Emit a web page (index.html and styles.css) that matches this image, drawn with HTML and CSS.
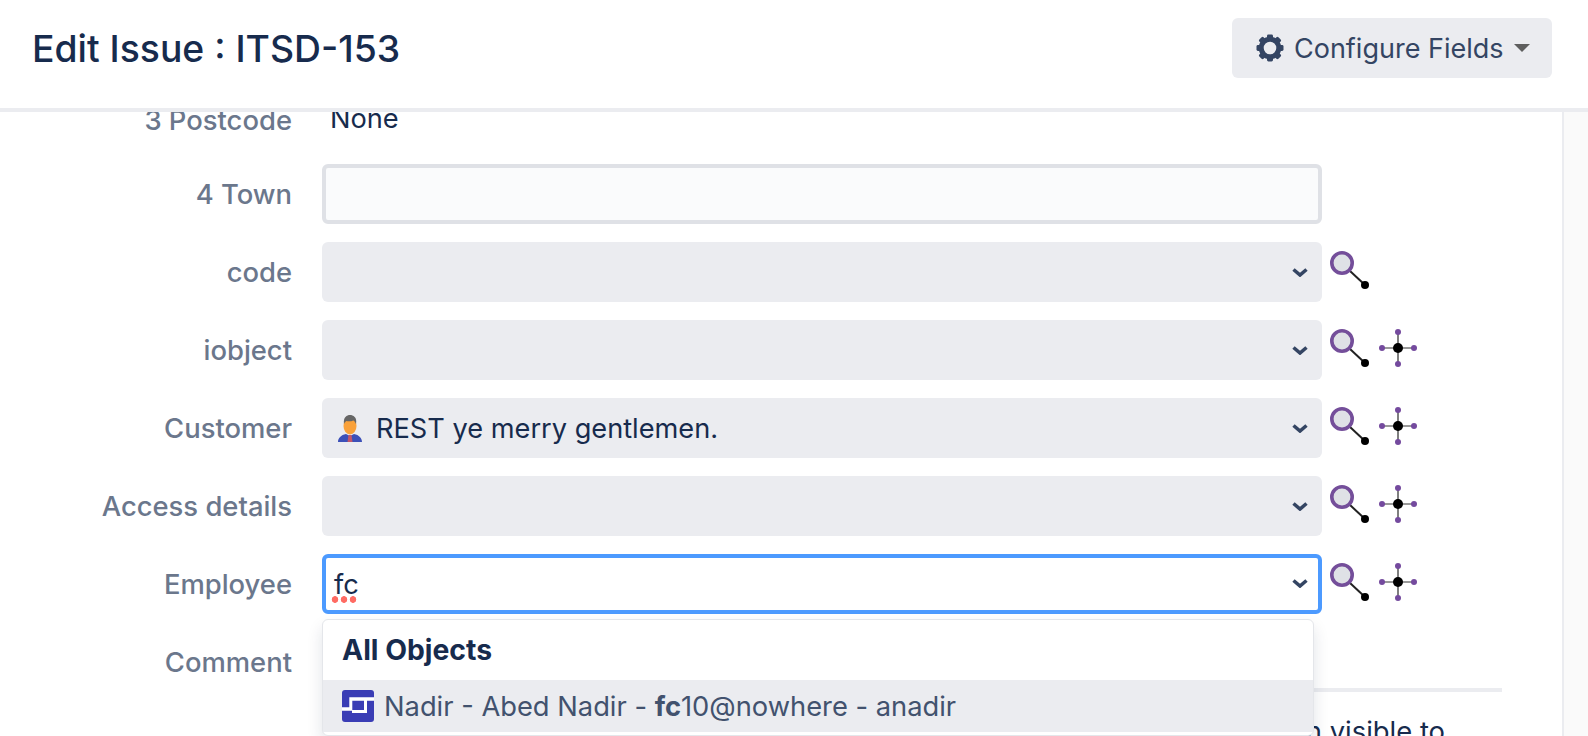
FILE: index.html
```html
<!DOCTYPE html>
<html>

<head>
    <title>Edit Issue : ITSD-153</title>
    <link rel="stylesheet" href="styles.css">
</head>

<body>
    <div class="dialogHeader">
        <h1 class="dialogTitle">Edit Issue : ITSD-153</h1>
        <button class="configureButton">
            <svg class="gearIcon" viewBox="0 0 28 28" width="28" height="28">
                <circle cx="14" cy="14" r="8.800" fill="none" stroke="#344563" stroke-width="5"/>
                <g fill="#344563">
                    <rect x="11" y="0.500" width="6" height="5" rx="1.400"/>
                    <rect x="11" y="22.500" width="6" height="5" rx="1.400"/>
                    <rect x="11" y="0.500" width="6" height="5" rx="1.400" transform="rotate(45 14 14)"/>
                    <rect x="11" y="22.500" width="6" height="5" rx="1.400" transform="rotate(45 14 14)"/>
                    <rect x="11" y="0.500" width="6" height="5" rx="1.400" transform="rotate(90 14 14)"/>
                    <rect x="11" y="22.500" width="6" height="5" rx="1.400" transform="rotate(90 14 14)"/>
                    <rect x="11" y="0.500" width="6" height="5" rx="1.400" transform="rotate(135 14 14)"/>
                    <rect x="11" y="22.500" width="6" height="5" rx="1.400" transform="rotate(135 14 14)"/>
                </g>
            </svg>
            <span>Configure Fields</span>
            <span class="caret"></span>
        </button>
    </div>

    <div class="dialogBody">
        <div class="formArea">
            <div class="formRow textRow">
                <label class="fieldLabel">3 Postcode</label>
                <span class="fieldValue">None</span>
            </div>
            <div class="formRow">
                <label class="fieldLabel">4 Town</label>
                <div class="textInput"></div>
            </div>
            <div class="formRow">
                <label class="fieldLabel">code</label>
                <div class="selectBox">
                    <svg class="chevron" viewBox="0 0 16 10" width="16" height="10"><use href="#chevronGlyph"/></svg>
                </div>
                <div class="fieldIcons">
                    <svg class="searchIcon" viewBox="0 0 40 40" width="40" height="40"><use href="#searchGlyph"/></svg>
                </div>
            </div>
            <div class="formRow">
                <label class="fieldLabel">iobject</label>
                <div class="selectBox">
                    <svg class="chevron" viewBox="0 0 16 10" width="16" height="10"><use href="#chevronGlyph"/></svg>
                </div>
                <div class="fieldIcons">
                    <svg class="searchIcon" viewBox="0 0 40 40" width="40" height="40"><use href="#searchGlyph"/></svg>
                    <svg class="graphIcon" viewBox="0 0 40 40" width="40" height="40"><use href="#graphGlyph"/></svg>
                </div>
            </div>
            <div class="formRow">
                <label class="fieldLabel">Customer</label>
                <div class="selectBox">
                    <svg class="personIcon" viewBox="0 0 24 28" width="24" height="28">
                        <path d="M0 28c0-4 3-7 8-8l4 2 4-2c5 1 8 4 8 8z" fill="#3c50b8"/>
                        <path d="M10.500 21h3l1 7h-5z" fill="#c2566b"/>
                        <ellipse cx="12" cy="12" rx="6.500" ry="8.500" fill="#f9a13a"/>
                        <path d="M6 10C5 3 9 1 12 1s7.500 2 6 9c-1-2-1.500-3-2.500-3.500-2 1-5.500 1-7 .5-1 .5-2 1.500-2.500 3z" fill="#666"/>
                    </svg>
                    <span class="selectText">REST ye merry gentlemen.</span>
                    <svg class="chevron" viewBox="0 0 16 10" width="16" height="10"><use href="#chevronGlyph"/></svg>
                </div>
                <div class="fieldIcons">
                    <svg class="searchIcon" viewBox="0 0 40 40" width="40" height="40"><use href="#searchGlyph"/></svg>
                    <svg class="graphIcon" viewBox="0 0 40 40" width="40" height="40"><use href="#graphGlyph"/></svg>
                </div>
            </div>
            <div class="formRow">
                <label class="fieldLabel">Access details</label>
                <div class="selectBox">
                    <svg class="chevron" viewBox="0 0 16 10" width="16" height="10"><use href="#chevronGlyph"/></svg>
                </div>
                <div class="fieldIcons">
                    <svg class="searchIcon" viewBox="0 0 40 40" width="40" height="40"><use href="#searchGlyph"/></svg>
                    <svg class="graphIcon" viewBox="0 0 40 40" width="40" height="40"><use href="#graphGlyph"/></svg>
                </div>
            </div>
            <div class="formRow">
                <label class="fieldLabel">Employee</label>
                <div class="selectBox selectFocused">
                    <span class="typedText">fc</span>
                    <svg class="chevron" viewBox="0 0 16 10" width="16" height="10"><use href="#chevronGlyph"/></svg>

                    <div class="dropMenu">
                        <div class="dropHeading">All Objects</div>
                        <div class="dropItem">
                            <svg class="objectIcon" viewBox="0 0 32 32" width="32" height="32">
                                <rect width="32" height="32" rx="3" fill="#3a3db5"/>
                                <path d="M7.300 7.300H32v3.400H10.300V20.700H0v-3.400h7.300zM22 10.700h3V23H10v-3h12z" fill="#fff"/>
                                <circle cx="16" cy="15.500" r="4" fill="#3a3db5"/>
                            </svg>
                            <span>Nadir - Abed Nadir - <b>fc</b>10@nowhere - anadir</span>
                        </div>
                    </div>
                </div>
                <div class="fieldIcons">
                    <svg class="searchIcon" viewBox="0 0 40 40" width="40" height="40"><use href="#searchGlyph"/></svg>
                    <svg class="graphIcon" viewBox="0 0 40 40" width="40" height="40"><use href="#graphGlyph"/></svg>
                </div>
            </div>
            <div class="formRow commentRow">
                <label class="fieldLabel">Comment</label>
                <div class="commentBox">
                    <div class="commentRule"></div>
                    <p class="commentNote">n visible to</p>
                </div>
            </div>
        </div>
        <div class="sideStrip"></div>
    </div>

    <!-- shared icon shapes -->
    <svg class="iconDefs" width="0" height="0">
        <defs>
            <path id="chevronGlyph" d="M1.500 2.500L8 8l6.500-5.500" fill="none" stroke="#344563" stroke-width="3.600"/>
            <g id="searchGlyph">
                <line x1="20" y1="20" x2="35" y2="34" stroke="#222" stroke-width="2"/>
                <circle cx="35" cy="34" r="4" fill="#000"/>
                <circle cx="12" cy="12" r="10.200" fill="#dfe1e6" stroke="#744e9a" stroke-width="3.600"/>
            </g>
            <g id="graphGlyph">
                <line x1="4" y1="20" x2="36" y2="20" stroke="#777" stroke-width="1.500"/>
                <line x1="20" y1="4" x2="20" y2="36" stroke="#555" stroke-width="1.500"/>
                <circle cx="20" cy="20" r="5" fill="#000"/>
                <circle cx="4" cy="20" r="3" fill="#744a9e"/>
                <circle cx="36" cy="20" r="3" fill="#744a9e"/>
                <circle cx="20" cy="4" r="3" fill="#744a9e"/>
                <circle cx="20" cy="36" r="3" fill="#744a9e"/>
            </g>
        </defs>
    </svg>
</body>

</html>
```

FILE: styles.css
```css
* {
    box-sizing: border-box;
}

body {
    display: flex;
    flex-direction: column;
    height: 736px;
    margin: 0;
    overflow: hidden;
    font-family: 'Inter', 'Liberation Sans', sans-serif;
    font-size: 27.2px;
    color: #172b4d;
    background-color: white;
}

.dialogHeader {
    display: flex;
    justify-content: space-between;
    align-items: center;
    height: 112px;
    padding: 0 36px 12px 32px;
    border-bottom: 4px solid #ebecf0;
    background-color: white;
    position: relative;
    z-index: 2;
    flex-shrink: 0;
}

.dialogTitle {
    margin: 0;
    font-size: 37.3px;
    font-weight: 500;
}

.configureButton {
    display: flex;
    align-items: center;
    gap: 10px;
    width: 320px;
    height: 60px;
    padding: 0 16px 0 24px;
    border: none;
    border-radius: 6px;
    background-color: #ebecf0;
    color: #344563;
    font-family: inherit;
    font-size: 27px;
    white-space: nowrap;
}

.gearIcon {
    flex-shrink: 0;
}

.caret {
    width: 0;
    height: 0;
    border-left: 8px solid transparent;
    border-right: 8px solid transparent;
    border-top: 8px solid #5e5e5e;
    flex-shrink: 0;
}

.dialogBody {
    display: flex;
    flex: 1;
    min-height: 0;
}

.formArea {
    flex: 1;
    display: flex;
    flex-direction: column;
    gap: 18px;
    margin-top: -9px;
}

.sideStrip {
    width: 26px;
    border-left: 2px solid #ebecf0;
    background-color: #fafafa;
}

.formRow {
    display: flex;
    align-items: center;
    height: 60px;
    flex-shrink: 0;
}

.textRow {
    align-items: flex-start;
    height: 43px;
}

.fieldLabel {
    width: 292px;
    margin-right: 30px;
    text-align: right;
    font-size: 27.4px;
    font-weight: 500;
    color: #6b778c;
    flex-shrink: 0;
}

.fieldValue {
    margin-top: -1px;
    margin-left: 8px;
}

.textInput {
    width: 1000px;
    height: 60px;
    border: 4px solid #dfe1e6;
    border-radius: 6px;
    background-color: #fafbfc;
}

.selectBox {
    position: relative;
    display: flex;
    align-items: center;
    width: 1000px;
    height: 60px;
    padding: 0 16px;
    border-radius: 6px;
    background-color: #ebecf0;
}

.selectFocused {
    border: 4px solid #4c9aff;
    padding: 0 8px;
    background-color: white;
}

.chevron {
    position: absolute;
    right: 14px;
    top: 25px;
}

.selectFocused .chevron {
    right: 10px;
    top: 20px;
}

.personIcon {
    margin-right: 14px;
}

/* spellcheck squiggle, three round dots under the word */
.typedText {
    padding: 0 0 4px 4px;
    margin: 0 0 -4px -4px;
    background-image:
        radial-gradient(circle at 5px 3.5px, #ff6b63 3px, transparent 3.6px),
        radial-gradient(circle at 14px 3.5px, #ff6b63 3px, transparent 3.6px),
        radial-gradient(circle at 23px 3.5px, #ff6b63 3px, transparent 3.6px);
    background-repeat: no-repeat;
    background-size: 100% 7px;
    background-position: 0 calc(100% - 2px);
}

.fieldIcons {
    display: flex;
    gap: 8px;
    align-self: flex-start;
    margin-left: 8px;
    margin-top: 9px;
}

.graphIcon {
    margin-top: -1px;
}

.dropMenu {
    position: absolute;
    top: 61px;
    left: -4px;
    width: 992px;
    height: 117px;
    border: 1px solid #e4e6ea;
    border-radius: 6px;
    background-color: white;
    box-shadow: 0 8px 16px rgba(9, 30, 66, 0.12);
    z-index: 1;
}

.dropHeading {
    height: 60px;
    padding: 13px 19px 0;
    font-size: 28.3px;
    font-weight: 700;
}

.dropItem {
    display: flex;
    align-items: center;
    gap: 10px;
    height: 52px;
    padding: 0 19px;
    background-color: #ebecf0;
    color: #42526e;
    font-size: 27.3px;
}

.commentRow {
    align-items: flex-start;
}

.commentRow .fieldLabel {
    margin-top: 13px;
}

.commentBox {
    width: 1180px;
    flex-shrink: 0;
}

.commentRule {
    height: 4px;
    margin-top: 56px;
    background-color: #ebecf0;
}

.commentNote {
    margin: 22px 0 0;
    padding-right: 57px;
    font-size: 27.4px;
    text-align: right;
}

.iconDefs {
    position: absolute;
}
```
